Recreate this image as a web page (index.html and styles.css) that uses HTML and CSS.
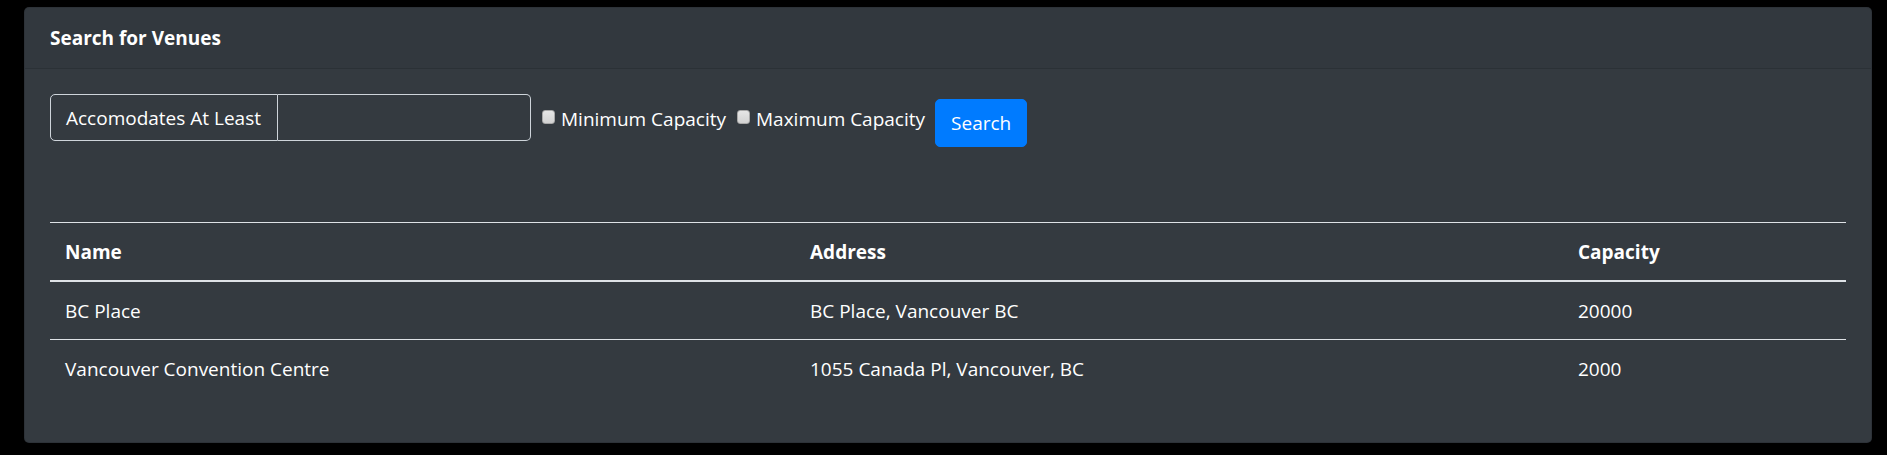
FILE: index.html
```html
<!DOCTYPE html>
<html lang="en">
<head>
<meta charset="utf-8">
<title>Search for Venues</title>
<link rel="stylesheet" href="styles.css">
</head>
<body>
<div class="card">
  <div class="card-header">Search for Venues</div>
  <div class="card-body">
    <form class="search-form">
      <div class="input-group">
        <span class="input-label">Accomodates At Least</span>
        <input class="input-field" type="text">
      </div>
      <label class="check"><input type="checkbox" class="check-box"><span>Minimum Capacity</span></label>
      <label class="check"><input type="checkbox" class="check-box"><span>Maximum Capacity</span></label>
      <button type="button" class="btn">Search</button>
    </form>
    <table class="venues">
      <thead>
        <tr><th class="col-name">Name</th><th class="col-address">Address</th><th class="col-capacity">Capacity</th></tr>
      </thead>
      <tbody>
        <tr><td>BC Place</td><td>BC Place, Vancouver BC</td><td>20000</td></tr>
        <tr><td>Vancouver Convention Centre</td><td>1055 Canada Pl, Vancouver, BC</td><td>2000</td></tr>
      </tbody>
    </table>
  </div>
</div>
</body>
</html>
```
FILE: styles.css
```css
* { box-sizing: border-box; }
html, body { margin: 0; }
body {
  background: #000;
  padding: 7px 15px 13px 24px;
  font-family: "Open Sans", "Noto Sans", sans-serif;
  font-size: 19px;
  line-height: 30px;
  color: #fff;
}
.card {
  background: #343a40;
  border: 1px solid rgba(0,0,0,.125);
  border-radius: 5px;
  overflow: hidden;
}
.card-header {
  padding: 15px 25px;
  font-weight: 700;
  background: rgba(0,0,0,.03);
  border-bottom: 1px solid rgba(0,0,0,.125);
}
.card-body {
  padding: 25px;
}
.search-form {
  display: flex;
  align-items: flex-start;
  margin: 0;
}
.input-group {
  display: flex;
}
.input-label {
  width: 228px;
  padding: 7.5px 15px;
  border: 1px solid #ced4da;
  border-radius: 5px 0 0 5px;
  white-space: nowrap;
}
.input-field {
  width: 253px;
  height: 47px;
  border: 1px solid #ced4da;
  border-left: 0;
  border-radius: 0 5px 5px 0;
  background: transparent;
  color: #fff;
  font: inherit;
  padding: 7.5px 15px;
  outline: none;
}
.check {
  display: flex;
  align-items: flex-start;
  margin-top: 10px;
  margin-left: 11px;
  white-space: nowrap;
}
.check-box {
  appearance: none;
  -webkit-appearance: none;
  width: 13px;
  height: 14px;
  margin: 6px 6px 0 0;
  background: linear-gradient(#e6e6e6, #d2d2d2);
  border: 1px solid #a8a8a8;
  border-radius: 3px;
}
.btn {
  margin-top: 5px;
  margin-left: 10px;
  padding: 8px 15px;
  font: inherit;
  line-height: 30px;
  color: #fff;
  background: #007bff;
  border: 1px solid #007bff;
  border-radius: 5px;
}
.venues {
  width: 100%;
  border-collapse: collapse;
  margin-top: 75px;
  margin-bottom: 20px;
  color: #fff;
}
.venues th, .venues td {
  padding: 13.5px 15px;
  border-top: 1px solid #dee2e6;
  text-align: left;
  vertical-align: top;
}
.venues th {
  font-weight: 700;
}
.venues thead th {
  border-bottom: 2px solid #dee2e6;
}
.col-name { width: 745px; }
.col-address { width: 768px; }
```
